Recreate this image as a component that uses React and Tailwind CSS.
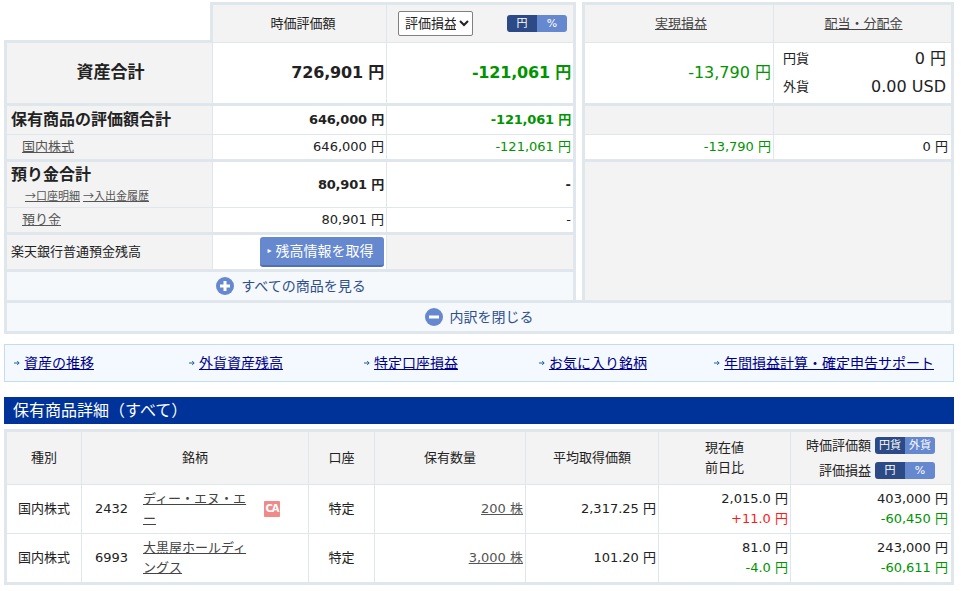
const line = "bg-[#dfe6ec]";
const grey = "bg-[#f3f3f3]";
const green = "text-[#009400]";

function Toggle({ a, b }) {
  return (
    <div className="flex h-[17px] w-[60px] shrink-0 overflow-hidden rounded-[3px] text-[11px] leading-[17px] text-white text-center">
      <span className="w-[30px] bg-[#2c4a86]">{a}</span>
      <span className="w-[30px] bg-[#6688cf]">{b}</span>
    </div>
  );
}

function Cell({ className = "", children }) {
  return <div className={"flex items-center min-w-0 " + className}>{children}</div>;
}

function Num({ className = "", children }) {
  return <Cell className={"justify-end bg-white pr-[2px] " + className}>{children}</Cell>;
}

function PlusMinus({ minus }) {
  return (
    <svg width="18" height="18" viewBox="0 0 18 18" className="shrink-0">
      <circle cx="9" cy="9" r="9" fill="#6688cf" />
      <rect x="4" y="7.5" width="10" height="3" fill="#fff" />
      {!minus && <rect x="7.5" y="4" width="3" height="10" fill="#fff" />}
    </svg>
  );
}

function Arrow() {
  return (
    <svg width="6" height="6" viewBox="0 0 6 6" className="mr-[4px] shrink-0">
      <path d="M0 3H5M3.2 1.2 5.2 3 3.2 4.8" fill="none" stroke="#1b5fa0" strokeWidth="1" />
    </svg>
  );
}

const navItems = ["資産の推移", "外貨資産残高", "特定口座損益", "お気に入り銘柄", "年間損益計算・確定申告サポート"];

function DetailRow({ kind, code, name, ca, qty, avg, price, diff, diffClass, value, pl }) {
  return (
    <div className={"grid h-[48px] grid-cols-[74px_226px_65px_150px_132px_131px_160px] gap-x-px " + line}>
      <Cell className="justify-center bg-white">{kind}</Cell>
      <Cell className="bg-white">
        <span className="ml-[13px] w-[48px]">{code}</span>
        <span className="w-[106px] leading-[20px] [line-break:loose]">
          <a className="text-[#444] underline">{name}</a>
        </span>
        {ca && (
          <span className="ml-[15px] flex h-[16px] w-[16px] items-center justify-center rounded-[1px] bg-[#f08a8a] text-[10px] font-bold leading-none tracking-[-1px] text-white">
            CA
          </span>
        )}
      </Cell>
      <Cell className="justify-center bg-white">特定</Cell>
      <Num>
        <a className="text-[#555] underline">{qty}</a>
      </Num>
      <Num>{avg}</Num>
      <div className="flex flex-col justify-center bg-white pr-[2px] text-right leading-[20px]">
        <div>{price}</div>
        <div className={diffClass}>{diff}</div>
      </div>
      <div className="flex flex-col justify-center bg-white pr-[3px] text-right leading-[20px]">
        <div>{value}</div>
        <div className={green}>{pl}</div>
      </div>
    </div>
  );
}

export default function App() {
  return (
    <div className="h-[591px] w-[961px] overflow-hidden bg-white pl-[4px] pt-[2px] font-['DejaVu_Sans','Noto_Sans_CJK_JP',sans-serif] text-[13px] text-[#222]">
      <div className="w-[950px]">
        <div className="flex h-[298px] justify-between">
          {/* left */}
          <div className="w-[572px]">
            <div className="flex h-[41px]">
              <div className="w-[206px] border-b-[3px] border-[#dfe6ec]" />
              <div className="w-[366px] border-x-[3px] border-t-[3px] border-b border-[#dfe6ec]">
                <div className={"grid h-full grid-cols-[173px_186px] gap-x-px " + line}>
                  <Cell className={"justify-center pl-[7px] " + grey}>時価評価額</Cell>
                  <Cell className={"justify-between pl-[11px] pr-[6px] " + grey}>
                    <select className="h-[25px] w-[75px] rounded-[2px] border border-[#808080] bg-white pl-[2px] text-[13px]">
                      <option>評価損益</option>
                    </select>
                    <Toggle a="円" b="%" />
                  </Cell>
                </div>
              </div>
            </div>
            <div className={"h-[257px] border-x-[3px] border-[#dfe6ec] " + line}>
              <div className="grid h-[60px] grid-cols-[205px_173px_186px] gap-x-px">
                <Cell className={"justify-center pl-[2px] text-[17px] font-bold " + grey}>資産合計</Cell>
                <Num className="text-[16px] font-bold tracking-[-0.2px]">726,901 円</Num>
                <Num className={"text-[16px] font-bold tracking-[-0.2px] " + green}>-121,061 円</Num>
              </div>
              <div className="mt-[3px] grid h-[28px] grid-cols-[205px_173px_186px] gap-x-px">
                <Cell className={"pl-[4px] text-[16px] font-bold " + grey}>保有商品の評価額合計</Cell>
                <Num className="font-bold tracking-[-0.2px]">646,000 円</Num>
                <Num className={"font-bold tracking-[-0.2px] " + green}>-121,061 円</Num>
              </div>
              <div className="mt-px grid h-[24px] grid-cols-[205px_173px_186px] gap-x-px">
                <Cell className={"pl-[15px] " + grey}>
                  <a className="text-[#555] underline">国内株式</a>
                </Cell>
                <Num>646,000 円</Num>
                <Num className={green}>-121,061 円</Num>
              </div>
              <div className="mt-[3px] grid h-[45px] grid-cols-[205px_173px_186px] gap-x-px">
                <div className={"pl-[4px] " + grey}>
                  <div className="mt-[1px] text-[16px] font-bold leading-[24px]">預り金合計</div>
                  <div className="flex gap-[3px] pl-[14px] font-['Noto_Sans_CJK_JP',sans-serif] text-[11px] leading-[16px] text-[#555]">
                    <a className="underline">→口座明細</a>
                    <a className="underline">→入出金履歴</a>
                  </div>
                </div>
                <Num className="font-bold tracking-[-0.2px]">80,901 円</Num>
                <Num className="font-bold">-</Num>
              </div>
              <div className="mt-px grid h-[24px] grid-cols-[205px_173px_186px] gap-x-px">
                <Cell className={"pl-[15px] " + grey}>
                  <a className="text-[#555] underline">預り金</a>
                </Cell>
                <Num>80,901 円</Num>
                <Num>-</Num>
              </div>
              <div className="mt-[3px] grid h-[34px] grid-cols-[205px_173px_186px] gap-x-px">
                <Cell className={"pl-[4px] " + grey}>楽天銀行普通預金残高</Cell>
                <Cell className="items-start justify-end bg-white pr-[2px] pt-[2px]">
                  <button className="flex h-[30px] w-[124px] items-center justify-center gap-[4px] rounded-[3px] border-b-[2px] border-[#4f70b5] bg-[#6688cf] pr-[3px] text-[14px] text-white">
                    <span className="text-[8px]">▸</span>残高情報を取得
                  </button>
                </Cell>
                <Cell className={grey} />
              </div>
              <div className="mt-[3px] flex h-[28px] items-center justify-center gap-[7px] bg-[#f5f9fb] pl-[2px] text-[14px] text-[#2f4f8f]">
                <PlusMinus />
                すべての商品を見る
              </div>
            </div>
          </div>
          {/* right */}
          <div className="w-[372px]">
            <div className="h-[41px] border-x-[3px] border-t-[3px] border-b border-[#dfe6ec]">
              <div className={"grid h-full grid-cols-[188px_177px] gap-x-px " + line}>
                <Cell className={"justify-center pl-[4px] text-[#444] " + grey}>
                  <a className="underline">実現損益</a>
                </Cell>
                <Cell className={"justify-center pl-[2px] text-[#444] " + grey}>
                  <a className="underline">配当・分配金</a>
                </Cell>
              </div>
            </div>
            <div className={"h-[257px] border-x-[3px] border-[#dfe6ec] " + line}>
              <div className="grid h-[60px] grid-cols-[188px_177px] gap-x-px">
                <Num className={"text-[16px] " + green}>-13,790 円</Num>
                <div className="flex flex-col justify-center gap-[4px] bg-white pl-[9px] pr-[5px]">
                  <div className="flex h-[24px] items-center justify-between">
                    <span>円貨</span>
                    <span className="text-[16px]">0 円</span>
                  </div>
                  <div className="flex h-[24px] items-center justify-between">
                    <span>外貨</span>
                    <span className="text-[16px]">0.00 USD</span>
                  </div>
                </div>
              </div>
              <div className="mt-[3px] grid h-[28px] grid-cols-[188px_177px] gap-x-px">
                <div className={grey} />
                <div className={grey} />
              </div>
              <div className="mt-px grid h-[24px] grid-cols-[188px_177px] gap-x-px">
                <Num className={green}>-13,790 円</Num>
                <Num className="pr-[3px]">0 円</Num>
              </div>
              <div className={"mt-[3px] h-[138px] " + grey} />
            </div>
          </div>
        </div>
        <div className="flex h-[34px] items-center justify-center gap-[7px] border-[3px] border-[#dfe6ec] bg-[#f5f9fb] text-[14px] text-[#2f4f8f]">
          <PlusMinus minus />
          内訳を閉じる
        </div>

        <div className="mt-[10px] flex h-[38px] items-center border border-[#c2dcf0] bg-[#f3f9fe] pl-[9px] text-[14px]">
          {navItems.map((t) => (
            <div key={t} className="flex w-[175px] shrink-0 items-center whitespace-nowrap">
              <Arrow />
              <a className="text-[#00008b] underline">{t}</a>
            </div>
          ))}
        </div>

        <div className="mt-[15px] flex h-[27px] items-center bg-[#003399] pl-[9px] text-[16px] text-white">
          保有商品詳細（すべて）
        </div>

        <div className={"mt-[5px] h-[156px] border-[3px] border-[#dfe6ec] " + line}>
          <div className="grid h-[52px] grid-cols-[74px_226px_65px_150px_132px_131px_160px] gap-x-px">
            <Cell className={"justify-center " + grey}>種別</Cell>
            <Cell className={"justify-center " + grey}>銘柄</Cell>
            <Cell className={"justify-center " + grey}>口座</Cell>
            <Cell className={"justify-center " + grey}>保有数量</Cell>
            <Cell className={"justify-center " + grey}>平均取得価額</Cell>
            <div className={"flex flex-col items-center justify-center leading-[20px] " + grey}>
              <div>現在値</div>
              <div>前日比</div>
            </div>
            <div className={"flex flex-col justify-center gap-[6px] " + grey}>
              <div className="flex items-center justify-end gap-[4px] whitespace-nowrap pr-[16px]">
                時価評価額
                <Toggle a="円貨" b="外貨" />
              </div>
              <div className="flex items-center justify-end gap-[4px] whitespace-nowrap pr-[16px]">
                評価損益
                <Toggle a="円" b="%" />
              </div>
            </div>
          </div>
          <div className="mt-px">
            <DetailRow
              kind="国内株式"
              code="2432"
              name="ディー・エヌ・エー"
              ca
              qty="200 株"
              avg="2,317.25 円"
              price="2,015.0 円"
              diff="+11.0 円"
              diffClass="text-[#ff1a1a]"
              value="403,000 円"
              pl="-60,450 円"
            />
          </div>
          <div className="mt-px">
            <DetailRow
              kind="国内株式"
              code="6993"
              name="大黒屋ホールディングス"
              qty="3,000 株"
              avg="101.20 円"
              price="81.0 円"
              diff="-4.0 円"
              diffClass={green}
              value="243,000 円"
              pl="-60,611 円"
            />
          </div>
        </div>
      </div>
    </div>
  );
}
